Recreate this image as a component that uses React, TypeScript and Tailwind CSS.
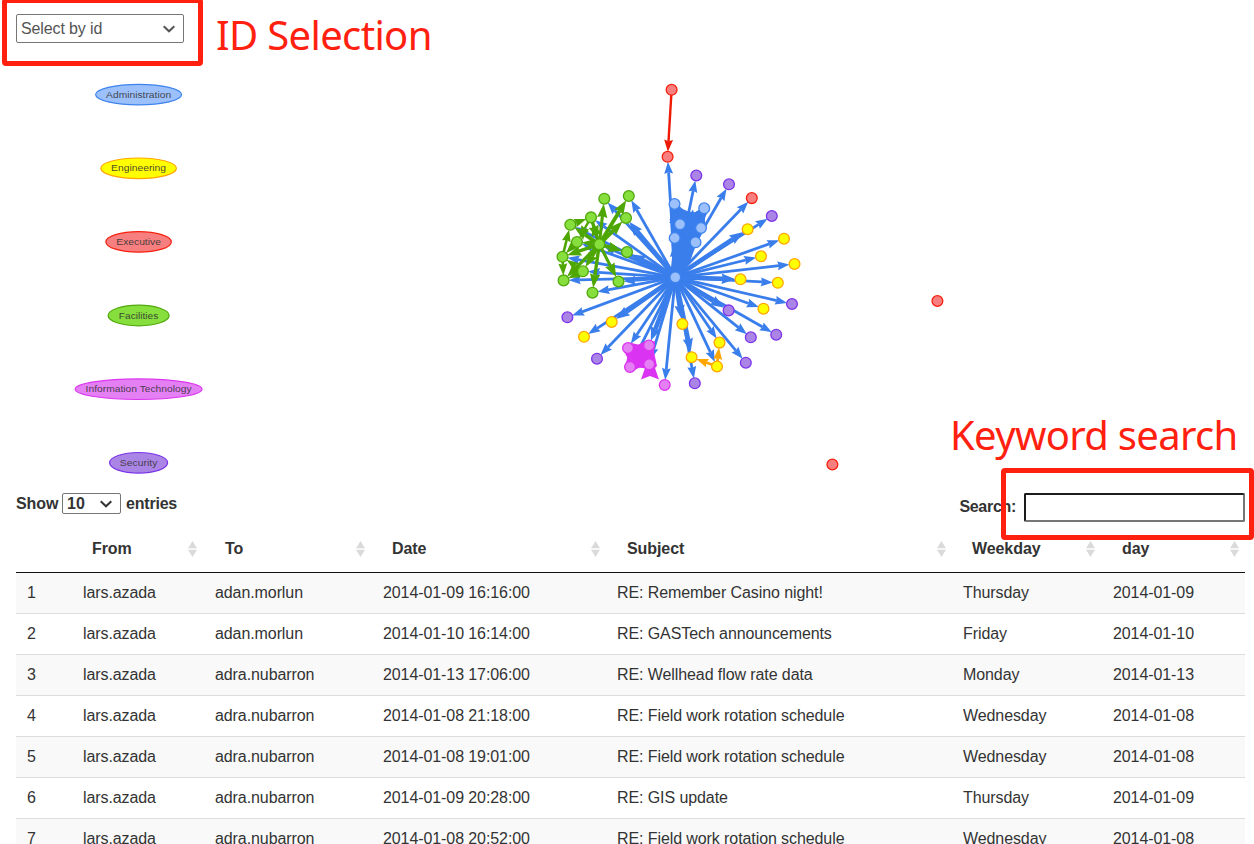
import React from "react";

type Group = "admin" | "eng" | "exec" | "fac" | "it" | "sec";
type Point = [number, number];

const palette: Record<Group, { fill: string; stroke: string; edge: string }> = {
  admin: { fill: "#9bc0fb", stroke: "#3f84ee", edge: "#3a7eec" },
  eng: { fill: "#ffff00", stroke: "#ffa500", edge: "#ffa500" },
  exec: { fill: "#f77f80", stroke: "#f5210f", edge: "#ef1a05" },
  fac: { fill: "#86df3c", stroke: "#51a80c", edge: "#4ea603" },
  it: { fill: "#e57ff4", stroke: "#dc35f0", edge: "#db33f2" },
  sec: { fill: "#ab85e5", stroke: "#7c34ea", edge: "#7c34ea" },
};

const nodes: Record<Group, Point[]> = {
  admin: [[674.5, 204], [704.2, 208.3], [680, 224.3], [701, 228], [674.7, 238], [695.5, 242.3]],
  eng: [
    [747.6, 229.2], [784, 238.7], [761, 256.3], [794.5, 264], [740.5, 279.3], [777.8, 282.8],
    [763.5, 308.7], [719.5, 342.6], [717, 366.5], [691.6, 357.2], [682.4, 324], [611.7, 322], [584, 336.8],
  ],
  exec: [[667.6, 156.8], [751.8, 198.1]],
  fac: [
    [604.3, 198.7], [628.8, 196], [570.3, 224.8], [591, 217.4], [626, 218], [577, 242],
    [599.3, 244.3], [562.5, 256.8], [582.9, 271.3], [563.6, 280.4], [627, 252], [618.5, 281.5], [592.5, 292.7],
  ],
  it: [[628, 348], [649, 345.5], [630, 367], [649.2, 364.3], [664.7, 385]],
  sec: [
    [696.3, 175.5], [729, 184.3], [771.8, 216], [792, 304], [776.2, 334.7], [750.8, 337.3],
    [745.8, 362.7], [694.8, 383.3], [597, 358.7], [567.4, 317.3], [728.6, 310.4],
  ],
};

const hub: Point = [675.3, 277.3];
const groups: Group[] = ["admin", "eng", "exec", "fac", "it", "sec"];
const bold = 4.6;

function Edge({ from, to, color, width = 2.8 }: { from: Point; to: Point; color: string; width?: number }) {
  const dx = to[0] - from[0];
  const dy = to[1] - from[1];
  const len = Math.hypot(dx, dy);
  const ux = dx / len;
  const uy = dy / len;
  const tx = to[0] - ux * 5;
  const ty = to[1] - uy * 5;
  const size = width > 3 ? 14 : 12;
  const bx = tx - ux * size;
  const by = ty - uy * size;
  const half = size * 0.37;
  const nx = tx - ux * size * 0.88;
  const ny = ty - uy * size * 0.88;
  const head = `${tx},${ty} ${bx - uy * half},${by + ux * half} ${nx},${ny} ${bx + uy * half},${by - ux * half}`;
  return (
    <g>
      <line x1={from[0]} y1={from[1]} x2={nx} y2={ny} stroke={color} strokeWidth={width} />
      <polygon points={head} fill={color} />
    </g>
  );
}

const facLinks: [number, number, number][] = [
  [6, 0, 3.1], [6, 1, 3.8], [6, 2, 3.8], [6, 3, 3.4], [6, 4, 4], [6, 5, 3], [6, 7, 3.4], [6, 8, 3.8],
  [6, 9, 3.4], [6, 10, 3.8], [6, 11, 3.1], [6, 12, 3.4], [2, 3, 2.6], [7, 2, 2.6], [7, 9, 2.4],
  [8, 7, 2.8], [8, 9, 2.8], [3, 5, 2.4], [5, 7, 2.2], [3, 6, 3.4],
];

function Mesh({ group, count }: { group: Group; count: number }) {
  const list = nodes[group].slice(0, count);
  return (
    <g>
      {list.flatMap((a, i) =>
        list.map((b, j) =>
          i === j || (group === "admin" && i + j === 1) ? null : (
            <Edge key={`${i}-${j}`} from={a} to={b} color={palette[group].edge} width={3.4} />
          ),
        ),
      )}
    </g>
  );
}

const boldTargets = new Set(["admin0", "admin2", "admin3", "admin4", "admin5", "eng0", "eng4", "eng10", "eng11", "sec10", "fac4", "fac10", "eng9", "it1"]);

const legend: { label: string; group: Group; y: number; rx: number; text: number }[] = [
  { label: "Administration", group: "admin", y: 94.6, rx: 43, text: 65 },
  { label: "Engineering", group: "eng", y: 168.3, rx: 37.8, text: 55 },
  { label: "Executive", group: "exec", y: 241.9, rx: 32.7, text: 44.5 },
  { label: "Facilities", group: "fac", y: 315.5, rx: 30.5, text: 39.5 },
  { label: "Information Technology", group: "it", y: 389.2, rx: 63.4, text: 106 },
  { label: "Security", group: "sec", y: 462.8, rx: 29, text: 37.5 },
];

function Network() {
  return (
    <svg className="block h-[485px] w-full" viewBox="0 0 1254 485" fontFamily="Liberation Sans, Arial, sans-serif">
      {legend.map((l) => (
        <g key={l.label}>
          <ellipse cx={138.6} cy={l.y} rx={l.rx} ry={10.3} fill={palette[l.group].fill} stroke={palette[l.group].stroke} strokeWidth={1.2} />
          <text
            x={138.6}
            y={l.y + 3.1}
            textAnchor="middle"
            fontSize={9.6}
            fill="#343434"
            fillOpacity={0.9}
            textLength={l.text}
            lengthAdjust="spacingAndGlyphs"
          >
            {l.label}
          </text>
        </g>
      ))}
      {groups.flatMap((g) =>
        nodes[g].map((p, i) => (
          <Edge key={g + i} from={hub} to={p} color={palette.admin.edge} width={boldTargets.has(g + i) ? bold : 2.8} />
        )),
      )}
      <polygon points="670,206 676,207 683,212 692,214 700,210 706,213 703,231 695,248 689,264 681,277 670,277 672,258 671,236" fill={palette.admin.edge} />
      <Mesh group="admin" count={6} />
      {facLinks.map(([a, b, w], i) => (
        <Edge key={i} from={nodes.fac[a]} to={nodes.fac[b]} color={palette.fac.edge} width={w} />
      ))}
      <Mesh group="it" count={4} />
      <polygon points="629,350 655,341 654,352 657,366 655,368 659,379.5 650,376 641,379.5 645,368 633,367" fill={palette.it.edge} />
      <Edge from={[717, 366.5]} to={[719.5, 342.6]} color={palette.eng.edge} />
      <Edge from={[717, 366.5]} to={[691.6, 357.2]} color={palette.eng.edge} />
      <Edge from={[671.6, 89.8]} to={[667.6, 156.8]} color={palette.exec.edge} width={2.4} />
      {groups.flatMap((g) =>
        nodes[g].map(([x, y], i) => (
          <circle key={g + i} cx={x} cy={y} r={5.4} fill={palette[g].fill} stroke={palette[g].stroke} strokeWidth={1.3} />
        )),
      )}
      {([hub, [671.6, 89.8], [937.4, 301], [832.4, 464.5]] as Point[]).map(([x, y], i) => {
        const c = palette[i === 0 ? "admin" : "exec"];
        return <circle key={x} cx={x} cy={y} r={5.4} fill={c.fill} stroke={c.stroke} strokeWidth={1.3} />;
      })}
    </svg>
  );
}

function Chevron({ className }: { className: string }) {
  return (
    <svg className={className} viewBox="0 0 12 8" fill="none" stroke="currentColor" strokeWidth="2">
      <path d="M0.7 1.3 6 6.3 11.3 1.3" />
    </svg>
  );
}

function SortIcon() {
  return (
    <svg className="h-4 w-[9px] shrink-0" viewBox="0 0 9 16" fill="#dadada">
      <path d="M4.5 0 9 7.3H0zM0 8.7h9L4.5 16z" />
    </svg>
  );
}

const columns = ["From", "To", "Date", "Subject", "Weekday", "day"];
const field = "RE: Field work rotation schedule";
const rows = [
  ["adan.morlun", "2014-01-09 16:16:00", "RE: Remember Casino night!", "Thursday", "2014-01-09"],
  ["adan.morlun", "2014-01-10 16:14:00", "RE: GASTech announcements", "Friday", "2014-01-10"],
  ["adra.nubarron", "2014-01-13 17:06:00", "RE: Wellhead flow rate data", "Monday", "2014-01-13"],
  ["adra.nubarron", "2014-01-08 21:18:00", field, "Wednesday", "2014-01-08"],
  ["adra.nubarron", "2014-01-08 19:01:00", field, "Wednesday", "2014-01-08"],
  ["adra.nubarron", "2014-01-09 20:28:00", "RE: GIS update", "Thursday", "2014-01-09"],
  ["adra.nubarron", "2014-01-08 20:52:00", field, "Wednesday", "2014-01-08"],
];

export default function App() {
  return (
    <div className="relative h-[844px] w-[1254px] overflow-hidden bg-white font-['Liberation_Sans',Arial,sans-serif] text-base text-[#333]">
      <Network />

      <div className="absolute left-4 top-3.5 h-[29px] w-[168px] text-[#545454]">
        <select className="block h-full w-full appearance-none rounded-[2px] border border-[#767676] bg-white pl-1 text-base leading-5 tracking-[-0.12px]">
          <option>Select by id</option>
        </select>
        <Chevron className="pointer-events-none absolute right-[9px] top-[11px] h-2 w-3" />
      </div>
      <div className="absolute left-[2px] top-[-2px] h-[68px] w-[201px] rounded-[4px] border-5 border-[#ff2010]" />
      <div className="absolute left-[216px] top-[8px] whitespace-nowrap font-['Noto_Sans',sans-serif] text-[40px] leading-[54px] tracking-[-0.64px] text-[#ff2010]">ID Selection</div>

      <div className="flex h-[47px] items-start justify-between pl-4 pr-[9px] font-bold">
        <label className="flex items-start pt-2">
          <span className="w-[42px] leading-[21px] tracking-[-0.1px]">Show</span>
          <span className="relative ml-1 mr-[5px] block h-[21px] w-[59px]">
            <select className="block h-full w-full appearance-none rounded-[2px] border border-[#767676] bg-white pl-1 pt-px text-base font-bold leading-[18px]">
              <option>10</option>
            </select>
            <Chevron className="pointer-events-none absolute right-[9px] top-[7px] h-2 w-3" />
          </span>
          <span className="leading-[21px] tracking-[-0.2px]">entries</span>
        </label>
        <label className="flex items-center gap-2 pt-2">
          <span className="-mt-0.5 tracking-[-0.3px]">Search:</span>
          <input className="h-[29px] w-[221px] rounded-[2px] border-2 border-b-[#767676] border-l-[#1c1c1e] border-r-[#767676] border-t-[#1c1c1e] bg-white" />
        </label>
      </div>

      <table className="ml-4 w-[1229px] table-fixed border-separate border-spacing-0 text-left">
        <colgroup>
          <col className="w-[57px]" />
          <col className="w-[132px]" />
          <col className="w-[168px]" />
          <col className="w-[234px]" />
          <col className="w-[346px]" />
          <col className="w-[150px]" />
          <col className="w-[142px]" />
        </colgroup>
        <thead>
          <tr className="h-[41px]">
            <th className="border-b border-[#111]" />
            {columns.map((c) => (
              <th
                key={c}
                className="border-b border-[#111] pl-[19px] pr-[8px] pt-0 pb-[7px] leading-5 tracking-[-0.08px] last:pr-[6px] nth-[3]:pl-5 nth-[5]:pl-5 nth-[5]:pr-[7px] nth-[4]:pr-[7px]"
              >
                <span className="flex items-center justify-between">
                  {c}
                  <span className="pt-px"><SortIcon /></span>
                </span>
              </th>
            ))}
          </tr>
        </thead>
        <tbody>
          {rows.map((r, i) => (
            <tr key={i} className="h-[41px] odd:bg-[#f9f9f9]">
              {[String(i + 1), "lars.azada", ...r].map((v, j) => (
                <td key={j} className="whitespace-nowrap border-b border-[#ddd] px-2.5 py-0 leading-5 tracking-[-0.09px] first:pl-[11px]">{v}</td>
              ))}
            </tr>
          ))}
        </tbody>
      </table>

      <div className="absolute left-[1001px] top-[468px] h-[72px] w-[253px] rounded-[4px] border-5 border-[#ff2010]" />
      <div className="absolute left-[950px] top-[408px] whitespace-nowrap font-['Noto_Sans',sans-serif] text-[40px] leading-[54px] tracking-[-0.68px] text-[#ff2010]">Keyword search</div>
    </div>
  );
}
